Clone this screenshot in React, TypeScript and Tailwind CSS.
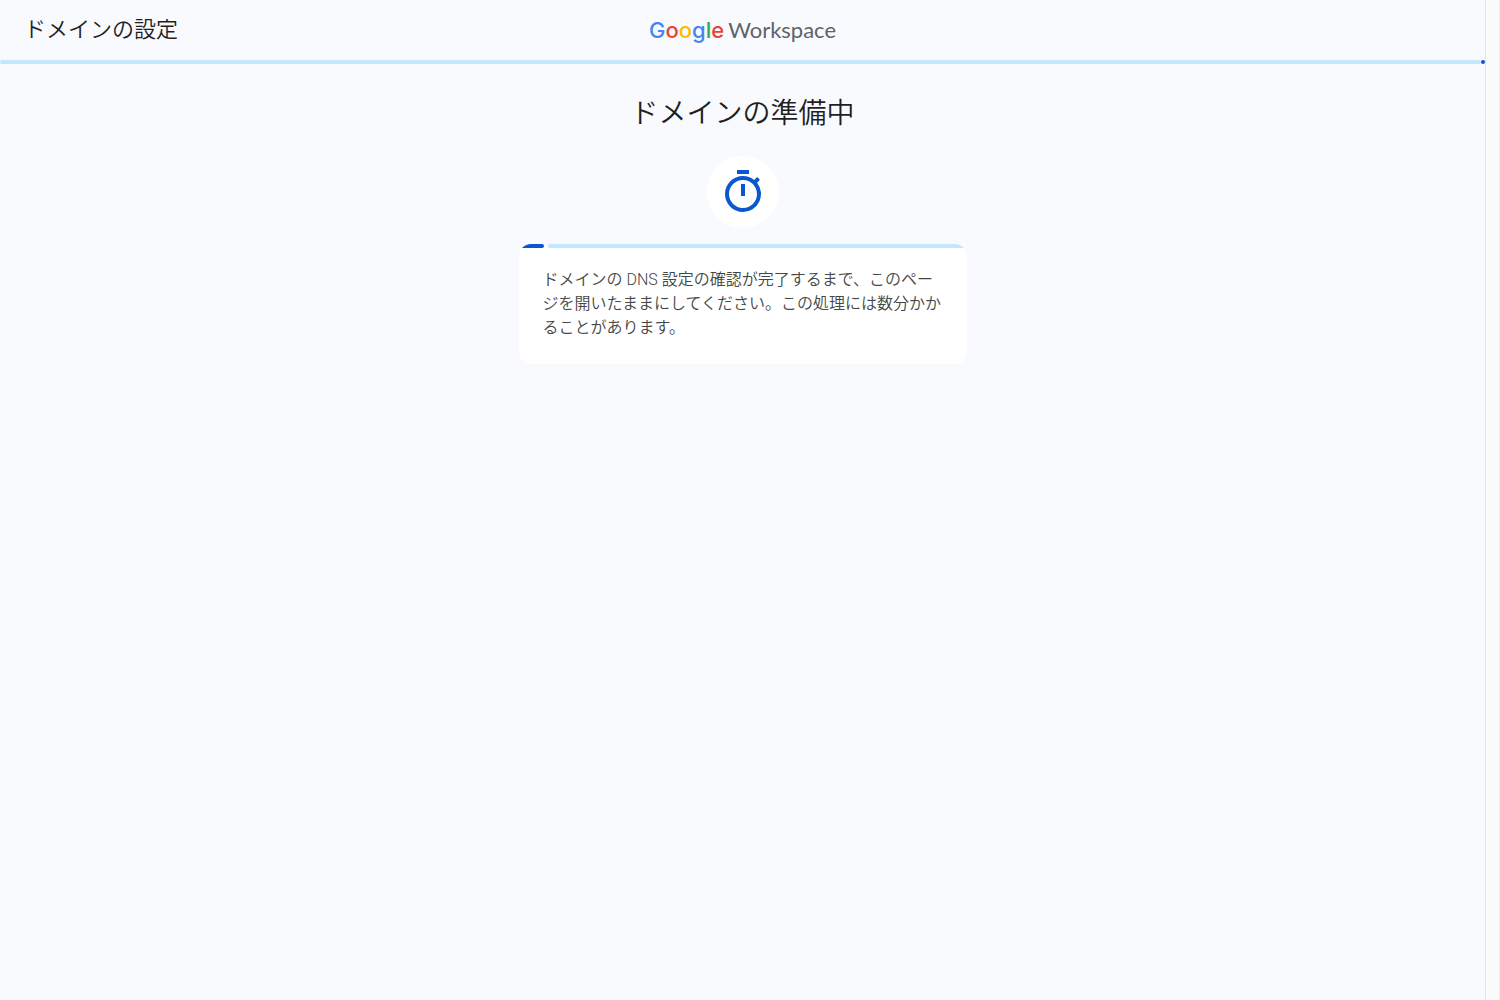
import React from 'react';
import { MdOutlineTimer } from 'react-icons/md';

function GoogleWorkspaceLogo() {
  return (
    <a href="#" aria-label="Google Workspace" className="flex items-baseline gap-1 leading-8">
      <span className="font-['Inter',sans-serif] text-[22px] font-medium">
        <span className="text-[#4285f4]">G</span>
        <span className="text-[#ea4335]">o</span>
        <span className="text-[#fbbc04]">o</span>
        <span className="text-[#4285f4]">g</span>
        <span className="text-[#34a853]">l</span>
        <span className="text-[#ea4335]">e</span>
      </span>
      <span className="font-['Lato',sans-serif] text-[22px] font-normal text-[#5f6368]">Workspace</span>
    </a>
  );
}

function Header({ title }: { title: string }) {
  return (
    <header className="grid grid-cols-[1fr_auto_1fr] items-center h-15 px-6">
      <h1 className="text-[22px] leading-7 text-[#1f1f1f]">{title}</h1>
      <GoogleWorkspaceLogo />
    </header>
  );
}

export default function App() {
  return (
    <div className="flex min-h-screen bg-[#f8fafe] font-['Roboto','Noto_Sans_CJK_JP',sans-serif] font-[350]">
      <div className="flex-1 min-w-0">
        <Header title="ドメインの設定" />
        <div role="progressbar" aria-label="設定の進行状況" className="flex h-1">
          <div className="flex-1 rounded-full bg-[#c2e7ff]" />
          <div className="w-1 rounded-full bg-[#0b57d0]" />
        </div>

        <main className="flex flex-col items-center px-6 pt-8">
          <h2 className="text-[28px] leading-9 text-[#1f1f1f]">ドメインの準備中</h2>
          <div className="mt-6 flex size-18 items-center justify-center rounded-full bg-white">
            <MdOutlineTimer className="size-12 text-[#0b57d0]" />
          </div>

          <section className="mt-4 w-full max-w-md overflow-hidden rounded-xl bg-white">
            <div role="progressbar" aria-label="DNS 設定の確認" className="flex h-1 gap-1 bg-[#f8fafe]">
              <div className="w-[25px] rounded-full bg-[#0b57d0]" />
              <div className="flex-1 rounded-full bg-[#c2e7ff]" />
            </div>
            <p className="px-6 pt-5 pb-6 text-base text-[#444746]">
              ドメインの DNS 設定の確認が完了するまで、このページを開いたままにしてください。この処理には数分かかることがあります。
            </p>
          </section>
        </main>
      </div>

      {/* scrollbar gutter */}
      <div className="w-[15px] shrink-0 border-l border-r border-l-[#e4e4e4] border-r-[#ededed] bg-[#fafafa]" />
    </div>
  );
}
